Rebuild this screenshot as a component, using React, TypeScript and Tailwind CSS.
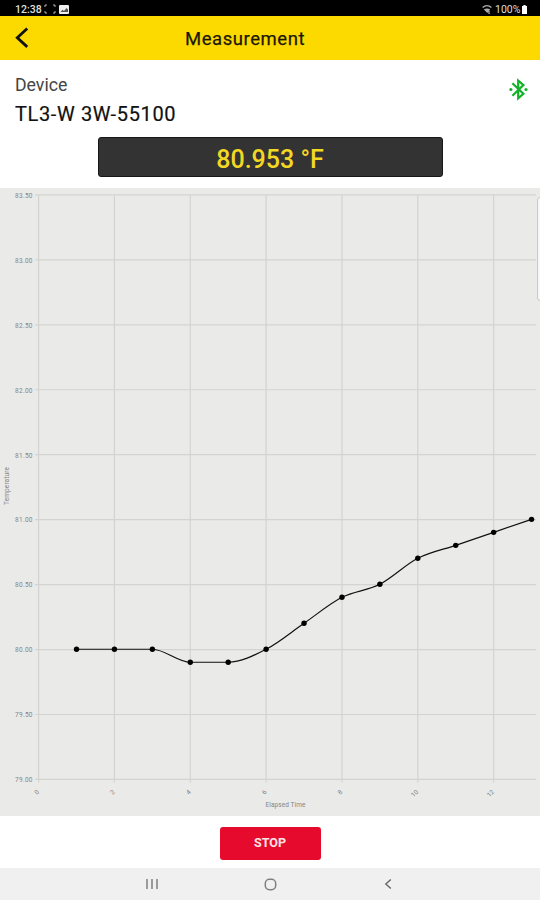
const X0 = 38.6;
const Y0 = 7.9;
const STEP_X = 37.92;
const PX_PER_DEGREE = 129.9;
const MAX_TEMP = 83.5;

const readings = [80, 80, 80, 79.9, 79.9, 80, 80.2, 80.4, 80.5, 80.7, 80.8, 80.9, 81];
const tempTicks = [83.5, 83, 82.5, 82, 81.5, 81, 80.5, 80, 79.5, 79];
const timeTicks = [0, 2, 4, 6, 8, 10, 12];

const toX = (time: number) => X0 + time * STEP_X;
const toY = (temp: number) => Y0 + (MAX_TEMP - temp) * PX_PER_DEGREE;

const points = readings.map((temp, i) => ({ x: toX(i + 1), y: toY(temp) - 0.3 }));

// Monotone cubic, so that the line never overshoots a reading
function linePath() {
  const slopes = points.slice(1).map((p, i) => (p.y - points[i].y) / (p.x - points[i].x));
  const tangents = points.map((_, i) => {
    if (i === 0) return slopes[0];
    if (i === points.length - 1) return slopes[i - 1];
    const a = slopes[i - 1];
    const b = slopes[i];
    if (a * b <= 0) return 0;
    return Math.sign(a) * Math.min(Math.abs(a) * 2, Math.abs(b) * 2, Math.abs(a + b) / 2);
  });
  const third = STEP_X / 3;
  return points.slice(1).reduce((d, p, i) => {
    const q = points[i];
    return `${d} C${q.x + third},${q.y + tangents[i] * third} ${p.x - third},${p.y - tangents[i + 1] * third} ${p.x},${p.y}`;
  }, `M${points[0].x},${points[0].y}`);
}

function StatusBar() {
  return (
    <div className="flex h-4 shrink-0 items-center justify-between bg-black pr-[13px] pl-[15px] text-white">
      <div className="flex items-center pt-0.5">
        <span className="w-[26px] pt-px text-[10.5px] leading-3 font-medium whitespace-nowrap text-[#dedede]">12:38</span>
        <svg className="ml-[3px]" width="12" height="10" viewBox="0 0 12 10" fill="none" stroke="#b5b5b5">
          <path d="M1 3V1h2M9 1h2v2M11 7v2H9M3 9H1V7" />
        </svg>
        <svg className="ml-[3px]" width="10" height="9" viewBox="0 0 10 9">
          <rect width="10" height="9" rx="1" fill="#eee" />
          <path d="M1.5 7l2-2.3L5 6l2.5-3L9 4.5V7z" fill="#555" />
        </svg>
      </div>
      <div className="flex items-center pt-0.5">
        <svg width="10" height="9" viewBox="0 0 10 9" fill="none">
          <path d="M.6 2.6C3.2.2 6.8.2 9.4 2.6" stroke="#aaa" strokeWidth="1.4" />
          <path d="M1.8 4.6C3.8 3 6.2 3 8.2 4.6L5.3 8z" fill="#aaa" />
          <path d="M7 6v3" stroke="#ddd" />
        </svg>
        <span className="ml-[3px] w-[27px] pt-px text-[10.5px] leading-3 whitespace-nowrap text-[#dedede]">100%</span>
        <svg width="5" height="9" viewBox="0 0 5 9" fill="#fff">
          <path d="M1.4 0h2.2v1H5v8H0V1h1.4z" />
        </svg>
      </div>
    </div>
  );
}

function Chart() {
  return (
    <svg className="block" width="540" height="629" viewBox="0 0 540 629">
      {/* Grid */}
      <g stroke="#d3d3d2" strokeWidth="1.2">
        {tempTicks.map((t) => (
          <line key={t} x1="35" x2="536" y1={toY(t)} y2={toY(t)} />
        ))}
        {timeTicks.map((t) => (
          <line key={t} x1={toX(t)} x2={toX(t)} y1={Y0} y2={toY(79) + 3} />
        ))}
      </g>

      {/* Tick labels */}
      <g fill="#858585" fontSize="6.5">
        {tempTicks.map((t) => (
          <text key={t} x="32.5" y={toY(t) + 2.8} textAnchor="end" textLength="17.5">
            {t.toFixed(2)}
          </text>
        ))}
        {timeTicks.map((t) => (
          <text
            key={t}
            x={toX(t) + 1}
            y={toY(79) + 13}
            textAnchor="end"
            transform={`rotate(-45 ${toX(t) + 1} ${toY(79) + 13})`}
          >
            {t}
          </text>
        ))}
        <text x="285.5" y="619.5" textAnchor="middle" textLength="40">
          Elapsed Time
        </text>
        <text x="8.5" y="299" textAnchor="middle" textLength="38" transform="rotate(-90 8.5 299)">
          Temperature
        </text>
      </g>

      {/* Readings */}
      <path d={linePath()} fill="none" stroke="#111" strokeWidth="1.2" />
      {points.map((p) => (
        <circle key={p.x} cx={p.x} cy={p.y} r="2.7" fill="#000" />
      ))}
    </svg>
  );
}

export default function App() {
  return (
    <div className="flex h-[900px] w-[540px] flex-col overflow-hidden bg-white font-[Roboto,sans-serif] text-black">
      <StatusBar />

      {/* Title bar */}
      <header className="grid h-11 shrink-0 grid-cols-[50px_390px] items-center bg-[#fcda00]">
        <svg className="-mt-px ml-[14px]" width="15" height="22" viewBox="0 0 15 22" fill="none" stroke="#111" strokeWidth="2.8">
          <path d="M13.2 1.5L3.3 10.7l9.9 9.2" />
        </svg>
        <h1 className="pt-0.5 text-center text-[18.5px] leading-6 tracking-[0.55px] text-[#1c1800] [-webkit-text-stroke:0.25px_#1c1800]">
          Measurement
        </h1>
      </header>

      {/* Device */}
      <section className="flex h-[127px] shrink-0 flex-col pt-3">
        <div className="flex justify-between pr-3 pl-[15px]">
          <div>
            <p className="h-[27px] text-[17.7px] leading-[26px] text-[#444]">Device</p>
            <p className="h-[38px] text-[20px] leading-[30px] tracking-[0.63px] text-[#111] [-webkit-text-stroke:0.2px_#111]">
              TL3-W 3W-55100
            </p>
          </div>
          <svg className="mt-1.5" width="19" height="23" viewBox="0 0 19 23" fill="none" stroke="#13b226" strokeWidth="2.2">
            <path d="M3.4 5.2l11 10.6-5.2 4.6V2.6l5.2 4.4-11 10.8" />
            <circle cx="1.9" cy="11.5" r="1.6" fill="#13b226" stroke="none" />
            <circle cx="17" cy="11.5" r="1.6" fill="#13b226" stroke="none" />
          </svg>
        </div>
        <div className="mx-auto flex h-10 w-[345px] items-center justify-center rounded-[3px] border border-[#171717] bg-[#333] pt-[5px] text-[25px] leading-8 font-medium text-[#f3d823]">
          80.953 °F
        </div>
      </section>

      {/* Chart */}
      <main className="relative mt-px h-[628px] shrink-0 overflow-hidden bg-[#eaeae9]">
        <div className="-mt-px">
          <Chart />
        </div>
        <div className="absolute top-[9px] -right-1 h-[104px] w-[7px] rounded-[3px] border border-[#c9c9c9] bg-[#f7f7f7]" />
      </main>

      <footer className="flex h-[52px] shrink-0 items-center justify-center pt-[3px]">
        <button className="h-[33px] w-[101px] rounded-[3px] bg-[#e60a2c] text-[12.5px] font-bold text-[#ffe3e7]">STOP</button>
      </footer>

      {/* Android navigation */}
      <nav className="grid h-8 shrink-0 grid-cols-[118px_118px_118px] items-center justify-center justify-items-center bg-[#f0f0f0]">
        <svg width="12" height="12" viewBox="0 0 12 12" stroke="#777" strokeWidth="1.4">
          <path d="M1 1v10M6 1v10M11 1v10" />
        </svg>
        <svg width="13" height="13" viewBox="0 0 13 13" fill="none" stroke="#808080" strokeWidth="1.5">
          <rect x="1.3" y="1.3" width="10.4" height="10.4" rx="4.2" />
        </svg>
        <svg width="8" height="12" viewBox="0 0 8 12" fill="none" stroke="#666" strokeWidth="1.4">
          <path d="M6.8 1.4L1.8 6l5 4.6" />
        </svg>
      </nav>
    </div>
  );
}
